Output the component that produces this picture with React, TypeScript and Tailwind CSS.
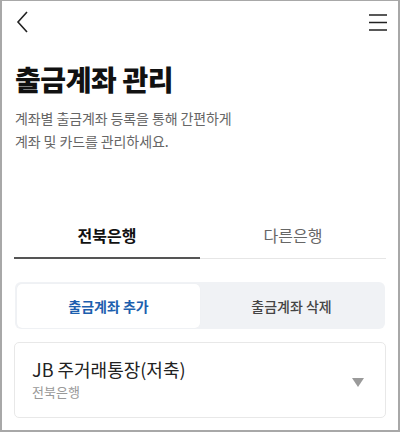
import React from "react";

export default function App() {
  return (
    <div
      className="w-[400px] h-[432px] bg-white overflow-hidden border-l-2 border-t border-r-2 border-b-2 border-[#a8a8a8] flex flex-col"
      style={{ fontFamily: '"Noto Sans CJK KR", "Noto Sans", sans-serif' }}
    >
      {/* header */}
      <div className="h-[44px] flex items-center justify-between pl-[14px] pr-[10px]">
        <svg width="14" height="22" viewBox="0 0 14 22" className="mt-[-2px]">
          <path d="M11 1 L2 11 L11 21" fill="none" stroke="#222" strokeWidth="1.6" />
        </svg>
        <svg width="20" height="18" viewBox="0 0 20 18" className="mt-[-2px]">
          <path d="M1 2 H19 M1 9.5 H19 M1 17 H19" stroke="#222" strokeWidth="1.6" />
        </svg>
      </div>

      {/* title */}
      <div className="pl-[13px] pr-[12px] pt-[16px]">
        <h1 className="text-[28px] font-black text-[#111] leading-[36px] tracking-[-0.4px]">출금계좌 관리</h1>
        <p className="mt-[10px] text-[14px] text-[#666] leading-[23px] tracking-[-0.1px]">
          계좌별 출금계좌 등록을 통해 간편하게
          <br />
          계좌 및 카드를 관리하세요.
        </p>
      </div>

      {/* tabs */}
      <div className="mx-[12px] mt-[64px] flex">
        <div className="flex-1 flex flex-col items-center">
          <div className="h-[40px] pb-[4px] flex items-center text-[16px] font-bold text-[#111]">전북은행</div>
          <div className="w-full h-[2px] bg-[#555]" />
        </div>
        <div className="flex-1 flex flex-col items-center">
          <div className="h-[40px] pb-[4px] flex items-center text-[16px] text-[#666]">다른은행</div>
          <div className="w-full h-[2px] flex items-end"><div className="w-full h-[1px] bg-[#e6e6e6]" /></div>
        </div>
      </div>

      {/* segment */}
      <div className="mx-[13px] mt-[23px] h-[47px] rounded-[6px] bg-[#f0f2f5] flex p-[2px] pb-[1px]">
        <div className="flex-1 bg-white rounded-[5px] flex items-center justify-center text-[14px] font-bold text-[#1d5fae] shadow-[0_0_1px_rgba(0,0,0,0.05)]">
          출금계좌 추가
        </div>
        <div className="flex-1 flex items-center justify-center text-[14px] font-medium text-[#444]">
          출금계좌 삭제
        </div>
      </div>

      {/* card */}
      <div className="mx-[12px] mt-[13px] h-[76px] rounded-[5px] border border-[#e8e8e8] flex items-center pl-[17px] pr-[21px]">
        <div className="flex-1 flex flex-col mt-[-2px]">
          <div className="text-[18px] text-[#222] leading-[26px]">JB 주거래통장(저축)</div>
          <div className="text-[13px] text-[#999] leading-[20px]">전북은행</div>
        </div>
        <svg width="12" height="9" viewBox="0 0 12 9" className="mt-[4px]">
          <path d="M0 0 H12 L6 9 Z" fill="#9a9a9a" />
        </svg>
      </div>
    </div>
  );
}
